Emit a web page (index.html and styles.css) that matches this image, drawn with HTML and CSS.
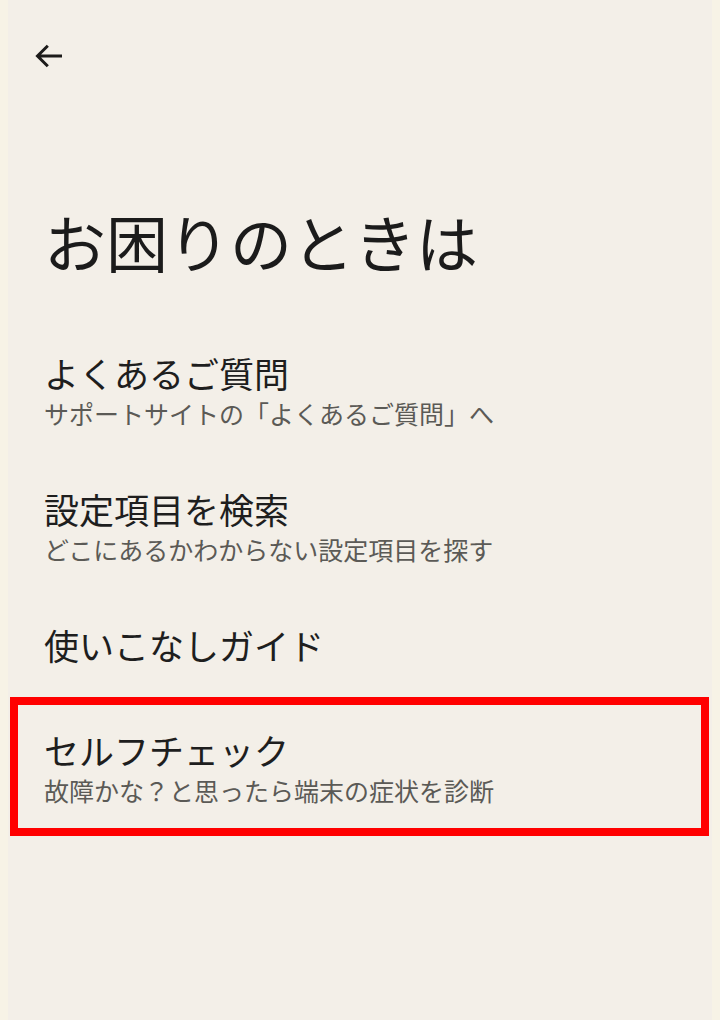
FILE: index.html
```html
<!DOCTYPE html>
<html lang="ja">
<head>
<meta charset="utf-8">
<title>お困りのときは</title>
<link rel="stylesheet" href="styles.css">
</head>
<body>
<div class="page">
  <header class="topbar">
    <svg class="back" width="28" height="24" viewBox="0 0 28 24" aria-label="戻る">
      <path d="M27 12 H2.5 M12.8 1.7 L2.5 12 L12.8 22.3" fill="none" stroke="#1c1b1a" stroke-width="3" stroke-linecap="butt" stroke-linejoin="miter"/>
    </svg>
  </header>
  <h1 class="title">お困りのときは</h1>
  <ul class="menu">
    <li class="item">
      <div class="item-title">よくあるご質問</div>
      <div class="item-sub">サポートサイトの「よくあるご質問」へ</div>
    </li>
    <li class="item">
      <div class="item-title">設定項目を検索</div>
      <div class="item-sub">どこにあるかわからない設定項目を探す</div>
    </li>
    <li class="item">
      <div class="item-title">使いこなしガイド</div>
    </li>
    <li class="item highlight">
      <div class="item-title">セルフチェック</div>
      <div class="item-sub">故障かな？と思ったら端末の症状を診断</div>
    </li>
  </ul>
</div>
</body>
</html>
```

FILE: styles.css
```css
html {
  background: #f7f3e6;
}
body {
  margin: 0;
  height: 1020px;
  font-family: "Noto Sans CJK JP", "Noto Sans", sans-serif;
  color: #1c1c1c;
}
.page {
  margin: 0 8px 0 8px;
  height: 1020px;
  background: #f3efe8;
}
.topbar {
  padding: 44px 0 0 27px;
  height: 24px;
}
.back {
  display: block;
}
.title {
  margin: 137px 0 0 36px;
  font-size: 62px;
  font-weight: 400;
  line-height: 72px;
  letter-spacing: 0;
  color: #1b1b1b;
}
.menu {
  list-style: none;
  margin: 45px 0 0 0;
  padding: 0;
}
.item {
  padding: 28px 0 28px 36px;
}
.item-title {
  font-size: 35px;
  line-height: 46px;
  color: #1e1e1e;
}
.item-sub {
  font-size: 25px;
  line-height: 34px;
  color: #5b5a56;
}
.item.highlight {
  margin: 1px 3px 0 2px;
  padding: 22px 0 21px 26px;
  border: 8px solid #ff0000;
}
```
